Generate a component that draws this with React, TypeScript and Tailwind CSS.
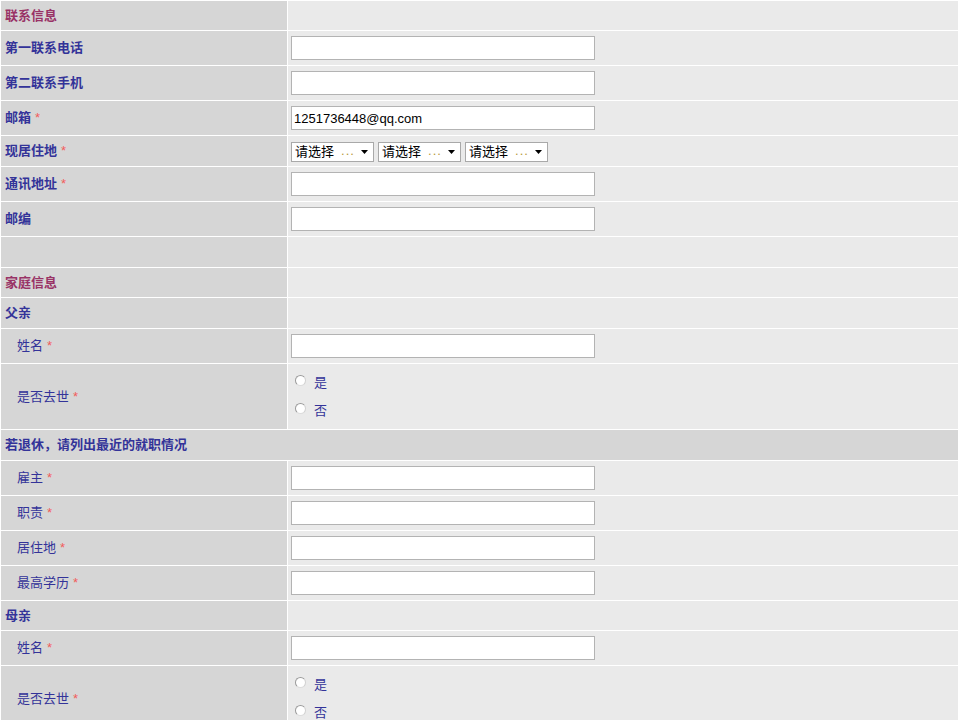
import type { ReactNode } from 'react'

const font = "font-['Liberation_Sans','Noto_Sans_CJK_SC',sans-serif]"

const Star = () => <span className="ml-[4px] font-normal text-[#f25c5c]">*</span>

interface RowProps {
  h: string
  left: ReactNode
  right?: ReactNode
  sub?: boolean
}

const Row = ({ h, left, right, sub }: RowProps) => (
  <div className={`grid grid-cols-[286px_1fr] gap-px ${h}`}>
    <div className={`flex items-center bg-[#d6d6d6] text-[13px] text-[#333399] ${sub ? 'pl-[16px] font-normal' : 'pl-[4px] font-bold'}`}>
      {left}
    </div>
    <div className="flex items-center bg-[#eaeaea] pl-[3px]">{right}</div>
  </div>
)

const TextInput = ({ value }: { value?: string }) => (
  <input
    type="text"
    defaultValue={value}
    className="h-[24px] w-[304px] border border-[#b3b3b3] bg-white px-[2px] text-[13px] text-black outline-none font-['Liberation_Sans',sans-serif]"
  />
)

const FakeSelect = () => (
  <div className="flex h-[20px] w-[83px] items-center border border-[#a9a9a9] bg-white pl-[3px] pr-[5px] text-[13px] text-black">
    <span>请选择</span>
    <span className="ml-[7px] -mt-[2px] text-[13px] leading-none tracking-[1px] text-[#b89a3a]">...</span>
    <svg className="ml-auto" width="7" height="4" viewBox="0 0 7 4">
      <path d="M0 0h7L3.5 4z" fill="#000" />
    </svg>
  </div>
)

const Radio = ({ label }: { label: string }) => (
  <div className="flex h-[16px] items-center">
    <span className="-mt-[4px] inline-block h-[11px] w-[11px] rounded-full border border-[#9a9a9a] border-b-[#dcdcdc] border-r-[#d0d0d0] bg-white" />
    <span className="ml-[8px] text-[13px] text-[#333399]">{label}</span>
  </div>
)

const Radios = () => (
  <div className="ml-[4px] flex flex-col gap-[12px]">
    <Radio label="是" />
    <Radio label="否" />
  </div>
)

const Header = ({ label, h }: { label: string; h: string }) => (
  <Row h={h} left={<span className="text-[#993366]">{label}</span>} />
)

export default function App() {
  return (
    <div className={`flex w-full flex-col gap-px bg-white p-px ${font}`}>
      <Header label="联系信息" h="h-[29px]" />
      <Row h="h-[34px]" left="第一联系电话" right={<TextInput />} />
      <Row h="h-[34px]" left="第二联系手机" right={<TextInput />} />
      <Row h="h-[34px]" left={<>邮箱<Star /></>} right={<TextInput value="1251736448@qq.com" />} />
      <Row
        h="h-[30px]"
        left={<>现居住地<Star /></>}
        right={
          <div className="flex gap-[4px] pt-[1px]">
            <FakeSelect />
            <FakeSelect />
            <FakeSelect />
          </div>
        }
      />
      <Row h="h-[34px]" left={<>通讯地址<Star /></>} right={<TextInput />} />
      <Row h="h-[34px]" left="邮编" right={<TextInput />} />
      <Row h="h-[30px]" left="" />

      <Header label="家庭信息" h="h-[29px]" />
      <Row h="h-[30px]" left="父亲" />
      <Row h="h-[34px]" sub left={<>姓名<Star /></>} right={<TextInput />} />
      <Row h="h-[65px]" sub left={<>是否去世<Star /></>} right={<Radios />} />

      <div className="flex h-[30px] items-center bg-[#d6d6d6] pl-[4px] text-[13px] font-bold text-[#333399]">
        若退休，请列出最近的就职情况
      </div>
      <Row h="h-[34px]" sub left={<>雇主<Star /></>} right={<TextInput />} />
      <Row h="h-[34px]" sub left={<>职责<Star /></>} right={<TextInput />} />
      <Row h="h-[34px]" sub left={<>居住地<Star /></>} right={<TextInput />} />
      <Row h="h-[34px]" sub left={<>最高学历<Star /></>} right={<TextInput />} />

      <Row h="h-[29px]" left="母亲" />
      <Row h="h-[34px]" sub left={<>姓名<Star /></>} right={<TextInput />} />
      <Row h="h-[65px]" sub left={<>是否去世<Star /></>} right={<Radios />} />
    </div>
  )
}
